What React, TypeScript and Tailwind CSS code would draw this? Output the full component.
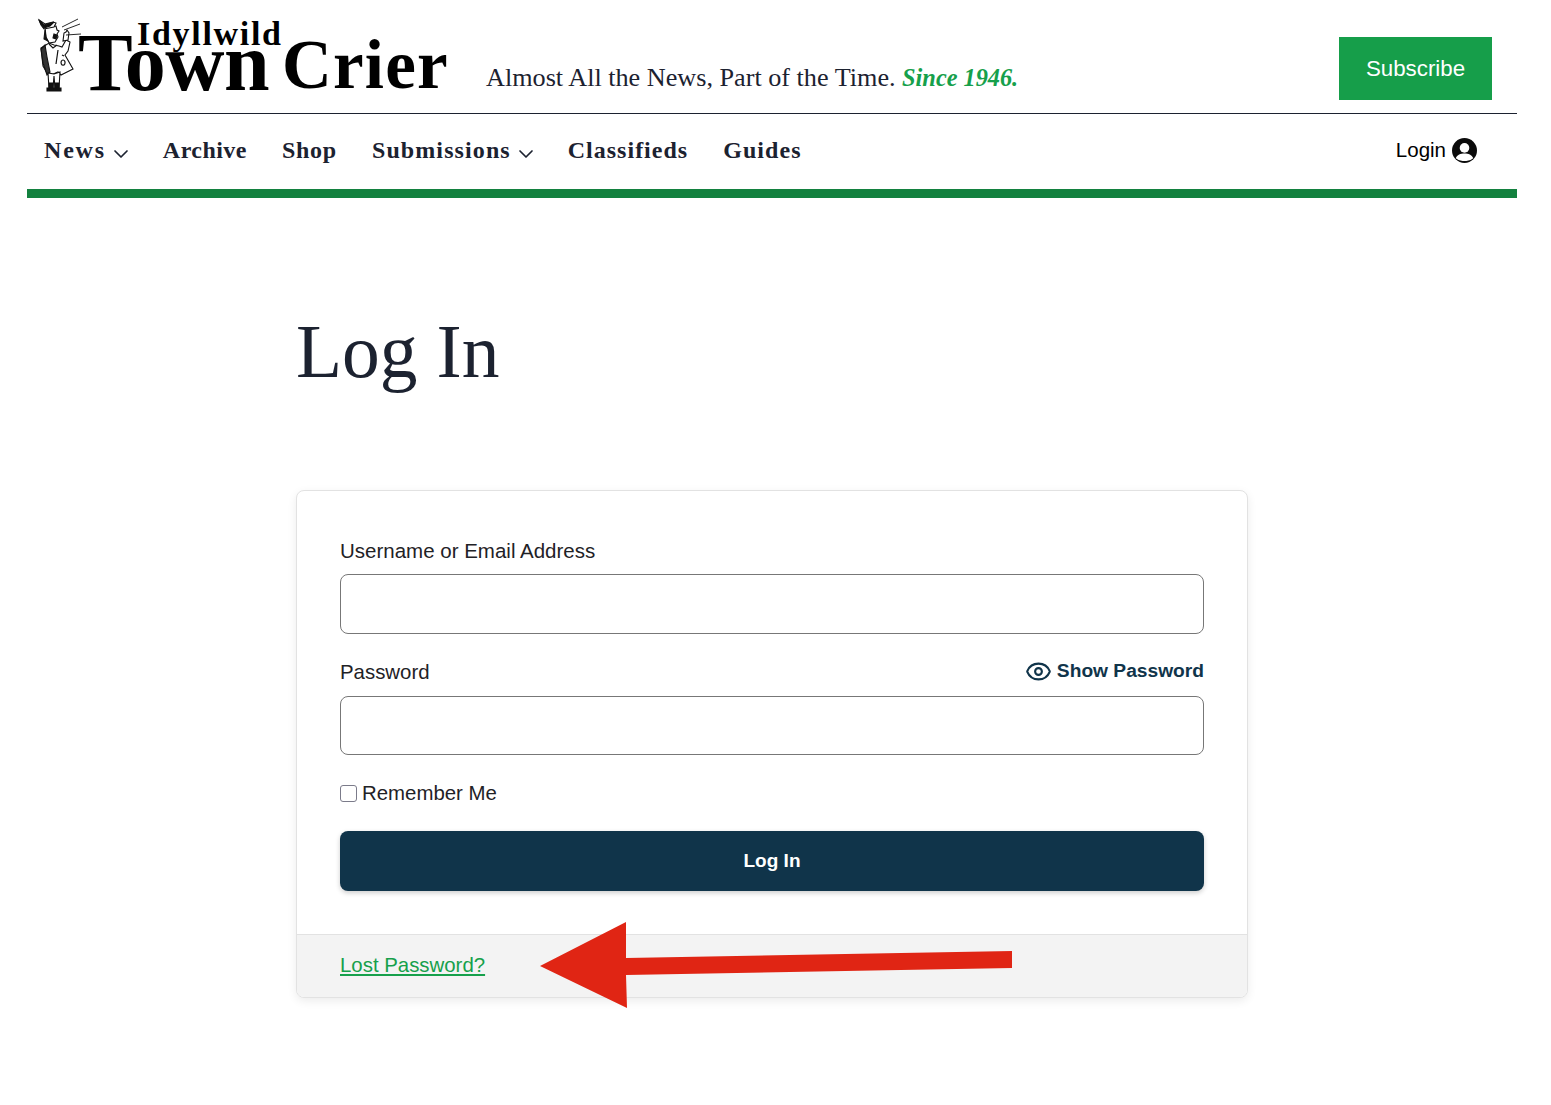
import { ChevronDown, Eye } from "lucide-react";

const serif = "font-['Liberation_Serif',serif]";
const sans = "font-['Liberation_Sans',Arial,sans-serif]";

function NavItem({ label, caret, className }: { label: string; caret?: boolean; className: string }) {
  return (
    <a className={`flex items-center text-[24px] font-bold text-[#1c2230] ${className}`}>
      {label}
      {caret ? <ChevronDown className="mt-[7px] mr-[-5px] ml-[3px] h-[24px] w-[24px] text-[#1c2230]" strokeWidth={1.7} /> : null}
    </a>
  );
}

function Crier() {
  return (
    <svg viewBox="0 0 46 76" className="h-[76px] w-[46px] shrink-0" fill="none" stroke="#111" strokeWidth="1.1">
      {/* coat */}
      <path d="M4 30l8-5 5 2 5 1 3 1 4-7 4 2-2 9-3 4 8 14-12 6-3-3-9 4-6-10z" fill="#fff" />
      <path d="M4 31l4-4 2 12 3 15-3 3-4-12z" fill="#333" />
      <path d="M25 37l2 1M21 32l-2 14M26 42a2 2.6 0 1 0 .1 0z" strokeWidth="1.2" />
      <path d="M12 26l4 4 4-3" />
      {/* head and cap */}
      <path d="M8 9l11-1 1 4 2 1-2 3 1 3-3 5-6 1-3-6z" fill="#fff" />
      <path d="M2 2l6 4 8-2 3 1-2 4-10 2-3-4z" fill="#fff" />
      <path d="M2 2l5 5 10-3-4 4-6 2-3-4zM8 12l1 8 2 3-4-2z" fill="#111" />
      <path d="M17 16l3 1-1 4-3-1z" fill="#111" />
      {/* hand */}
      <path d="M26 23l1-8 2-1 1-2 2 3-1 7z" fill="#fff" />
      {/* shout lines */}
      <path d="M25 9L41 1M27 12l16-6M29 17l15-1" strokeWidth="0.9" />
      {/* legs */}
      <path d="M11 55l1 15h4l1-12 1 12h4l1-16-6 2z" fill="#fff" />
      <path d="M12 65h4v5h-4zM18 65h4v5h-4zM10 70h7v3h-7zM18 70h6v3h-6z" fill="#111" />
    </svg>
  );
}

export default function App() {
  return (
    <div className={`relative min-h-[1105px] bg-white ${sans}`}>
      <header className="ml-[27px] w-[1490px]">
        <div className="flex h-[114px] items-start border-b border-[#1c2230]">
          <div className="mt-[18px] ml-[10px] flex">
            <Crier />
            <div className="relative ml-[-5px] h-[76px] w-[372px] font-['Liberation_Serif',serif] text-black">
              <span className="absolute top-[1px] left-[59px] text-[34px] leading-[30px] font-bold tracking-[1.7px]">Idyllwild</span>
              <span className="absolute top-[23px] left-0 text-[82px] leading-[44px] font-bold tracking-[-0.5px]">Town</span>
              <span className="absolute top-[8px] left-[204px] text-[69px] leading-[78px] font-bold tracking-[1.2px]">Crier</span>
            </div>
          </div>
          <p className={`mt-[60px] ml-[36px] text-[26.2px] leading-[36px] text-[#1c2230] ${serif}`}>
            Almost All the News, Part of the Time. <em className="text-[24.3px] font-bold text-[#16a04b]">Since 1946.</em>
          </p>
          <a className="mt-[37px] mr-[25px] ml-auto flex h-[63px] w-[153px] items-center justify-center bg-[#169e4a] text-[22.3px] text-white">
            Subscribe
          </a>
        </div>
        <nav className="flex h-[75px] items-center pr-[40px] pb-[3px] pl-[17px]">
          <div className={`flex gap-[35px] ${serif}`}>
            <NavItem label="News" caret className="tracking-[1.8px]" />
            <NavItem label="Archive" className="tracking-[0.45px]" />
            <NavItem label="Shop" className="tracking-[0.75px]" />
            <NavItem label="Submissions" caret className="tracking-[1.1px]" />
            <NavItem label="Classifieds" className="tracking-[1px]" />
            <NavItem label="Guides" className="tracking-[1.1px]" />
          </div>
          <a className="ml-auto flex items-center gap-[6px] text-[20.5px] text-black">
            Login
            <svg viewBox="0 0 24 24" className="h-[25px] w-[25px]">
              <circle cx="12" cy="12" r="12" fill="#0b0b0b" />
              <circle cx="12" cy="9.5" r="4.6" fill="#fff" />
              <path d="M3.6 19.5c1.4-3.6 4.6-4.6 8.4-4.6s7 1 8.4 4.6A10 10 0 0 1 12 22a10 10 0 0 1-8.4-2.5z" fill="#fff" />
            </svg>
          </a>
        </nav>
        <div className="h-[9px] bg-[#13813f]" />
      </header>

      <main className="ml-[296px] w-[952px] pt-[112px]">
        <h1 className={`text-[75.5px] leading-[84px] text-[#1c2230] ${serif}`}>Log In</h1>

        <div className="mt-[96px] overflow-hidden rounded-[8px] border border-[#e2e2e2] bg-white shadow-[0_3px_10px_rgba(0,0,0,0.08)]">
          <form className="px-[43px] pt-[47px] pb-[43px]">
            <label className="block text-[20.5px] leading-[26px] text-[#1f2226]">Username or Email Address</label>
            <input className="mt-[10px] block h-[60px] w-full rounded-[8px] border border-[#777] bg-white" />
            <div className="mt-[25px] flex h-[26px] items-center justify-between">
              <label className="text-[20.4px] leading-[26px] text-[#1f2226]">Password</label>
              <span className="flex items-center gap-[5px] pb-[2px] text-[19.2px] leading-[24px] font-bold text-[#10344a]">
                <Eye className="h-[27px] w-[27px]" strokeWidth={1.9} />
                Show Password
              </span>
            </div>
            <input type="password" className="mt-[11px] block h-[59px] w-full rounded-[8px] border border-[#777] bg-white" />
            <label className="mt-[25px] flex items-center gap-[5px] text-[20.4px] leading-[26px] text-[#1f2226]">
              <span className="h-[17px] w-[17px] rounded-[3px] border border-[#7b7b8a] bg-white" />
              Remember Me
            </label>
            <button type="button" className="mt-[25px] block h-[60px] w-full rounded-[8px] bg-[#10344a] text-[19px] font-bold text-white shadow-[0_2px_5px_rgba(0,0,0,0.2)]">
              Log In
            </button>
          </form>
          <div className="flex h-[63px] items-center border-t border-[#e2e2e2] bg-[#f3f3f3] pr-[43px] pb-[1px] pl-[43px]">
            <a className="text-[20.4px] text-[#16a04b] underline">Lost Password?</a>
          </div>
        </div>
      </main>

      <svg className="absolute top-[915px] left-[535px] h-[100px] w-[485px]" viewBox="535 915 485 100">
        <polygon points="540,966 626,922 626,958 1012,951 1012,968 626,975 627,1008" fill="#e02514" />
      </svg>
    </div>
  );
}
